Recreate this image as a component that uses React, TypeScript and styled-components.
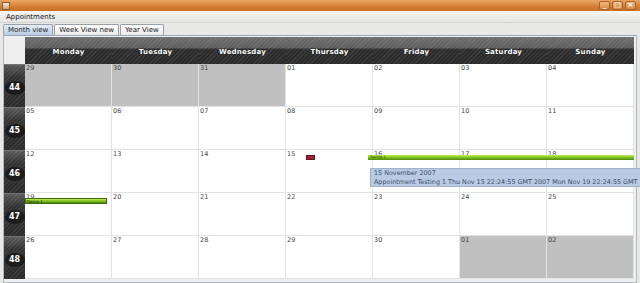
import React from 'react'
import styled, { createGlobalStyle } from 'styled-components'

const Global = createGlobalStyle`
  html, body { margin: 0; padding: 0; background: #e6e6e6; overflow: hidden; }
  * { box-sizing: border-box; }
`

const days = ['Monday', 'Tuesday', 'Wednesday', 'Thursday', 'Friday', 'Saturday', 'Sunday']

const weeks = [
  { n: 44, dates: ['29', '30', '31', '01', '02', '03', '04'], grey: [0, 1, 2] },
  { n: 45, dates: ['05', '06', '07', '08', '09', '10', '11'], grey: [] },
  { n: 46, dates: ['12', '13', '14', '15', '16', '17', '18'], grey: [] },
  { n: 47, dates: ['19', '20', '21', '22', '23', '24', '25'], grey: [] },
  { n: 48, dates: ['26', '27', '28', '29', '30', '01', '02'], grey: [5, 6] },
]

const App = () => {
  return (
    <Window>
      <Global />
      <TitleBar>
        <AppIcon />
        <WinButtons>
          <WinBtn>_</WinBtn>
          <WinBtn>□</WinBtn>
          <WinBtn>×</WinBtn>
        </WinButtons>
      </TitleBar>
      <MenuBar>Appointments</MenuBar>
      <Tabs>
        <Tab active>Month view</Tab>
        <Tab>Week View new</Tab>
        <Tab>Year View</Tab>
      </Tabs>
      <Panel>
        <Calendar>
          <Corner />
          {days.map(d => (
            <DayHead key={d}>{d}</DayHead>
          ))}
          {weeks.map((w, i) => (
            <React.Fragment key={w.n}>
              <WeekCell>
                <WeekBadge>{w.n}</WeekBadge>
              </WeekCell>
              {w.dates.map((d, j) => (
                <Cell key={j} grey={w.grey.includes(j)}>
                  <DateNum>{d}</DateNum>
                  {i === 2 && j === 3 && <RedMark />}
                  {i === 2 && j === 4 && <LongBar>Testing 1</LongBar>}
                  {i === 3 && j === 0 && <DemoBar>Demo 1</DemoBar>}
                </Cell>
              ))}
            </React.Fragment>
          ))}
        </Calendar>
        <Tooltip>
          <div>15 November 2007</div>
          <div>Appointment Testing 1 Thu Nov 15 22:24:55 GMT 2007 Mon Nov 19 22:24:55 GMT</div>
        </Tooltip>
      </Panel>
    </Window>
  )
}

export default App

const Window = styled.div`
  width: 640px;
  height: 283px;
  display: flex;
  flex-direction: column;
  font-family: 'DejaVu Sans', sans-serif;
  background: #e8e8e7;
`
const TitleBar = styled.div`
  height: 11px;
  flex: none;
  background: linear-gradient(#e9a765, #d47e34 60%, #c96f27);
  display: flex;
  align-items: center;
  justify-content: space-between;
  padding: 0 4px 0 2px;
`
const AppIcon = styled.div`
  width: 8px;
  height: 8px;
  border: 1px solid #8a5a2a;
  background: linear-gradient(#f6e9d8, #c9a47c);
`
const WinButtons = styled.div`
  display: flex;
  gap: 2px;
`
const WinBtn = styled.div`
  width: 11px;
  height: 9px;
  border: 1px solid #a8602a;
  border-radius: 2px;
  background: linear-gradient(#f0b880, #d58a48);
  color: #fff;
  font-size: 7px;
  line-height: 7px;
  text-align: center;
  font-weight: bold;
`
const MenuBar = styled.div`
  height: 12px;
  flex: none;
  background: linear-gradient(#f4f4f3, #e6e6e4);
  font-size: 7px;
  line-height: 12px;
  padding-left: 6px;
  color: #111;
  border-bottom: 1px solid #d4d4d2;
`
const Tabs = styled.div`
  height: 12px;
  flex: none;
  display: flex;
  align-items: flex-end;
  gap: 1px;
  padding-left: 3px;
`
const Tab = styled.div<{ active?: boolean }>`
  height: 11px;
  padding: 0 4px;
  font-size: 7px;
  line-height: 10px;
  color: #1a1a1a;
  border: 1px solid #9aa0a8;
  border-bottom: none;
  border-radius: 2px 2px 0 0;
  background: ${p => (p.active ? 'linear-gradient(#e4edf7, #b9cde4)' : 'linear-gradient(#fdfdfd, #ebebeb)')};
`
const Panel = styled.div`
  position: relative;
  flex: 1;
  margin: 0 3px 2px 3px;
  border: 1px solid #b4b8be;
  border-top: 1px solid #9aa6b4;
  background: #eef0f2;
  padding: 1px 2px 3px 0;
`
const stripes = `repeating-linear-gradient(135deg, rgba(255,255,255,0.07) 0 1px, rgba(0,0,0,0) 1px 3px)`
const Calendar = styled.div`
  display: grid;
  grid-template-columns: 21px repeat(7, 87px);
  grid-template-rows: 27px repeat(5, 43px);
`
const Corner = styled.div`
  background: #eeeeee;
`
const DayHead = styled.div`
  background: ${stripes}, linear-gradient(#6e6e6e 0, #5e5e5e 40%, #2e2e2e 45%, #2a2a2a 100%);
  color: #fff;
  font-weight: bold;
  font-size: 7px;
  display: flex;
  align-items: center;
  justify-content: center;
  padding-top: 2px;
  letter-spacing: 0.2px;
  text-shadow: 0 0 1px #000;
`
const WeekCell = styled.div`
  background: ${stripes}, linear-gradient(#5a5a5a, #333 30%, #2c2c2c);
  display: flex;
  align-items: center;
  justify-content: center;
  border-top: 1px solid #777;
`
const WeekBadge = styled.div`
  width: 20px;
  height: 14px;
  border-radius: 50%;
  background: #1c1c1c;
  color: #fff;
  font-weight: bold;
  font-size: 8px;
  line-height: 14px;
  text-align: center;
  margin-top: 4px;
`
const Cell = styled.div<{ grey?: boolean }>`
  position: relative;
  background: ${p => (p.grey ? '#c0c0c0' : '#ffffff')};
  border-right: 1px solid #dbe5ee;
  border-bottom: 1px solid #e2e2e2;
`
const DateNum = styled.div`
  font-size: 6.5px;
  color: #444;
  padding: 1px 0 0 1px;
  line-height: 7px;
`
const RedMark = styled.div`
  position: absolute;
  left: 20px;
  top: 5px;
  width: 9px;
  height: 5px;
  background: #a3203a;
  border: 1px solid #6a1020;
`
const LongBar = styled.div`
  position: absolute;
  left: -5px;
  top: 5px;
  width: 266px;
  height: 5px;
  background: linear-gradient(#c4ef5a, #7cc11f 50%, #4d8a0e);
  font-size: 3.5px;
  line-height: 5px;
  color: #2a4a08;
  padding-left: 2px;
  z-index: 1;
`
const DemoBar = styled.div`
  position: absolute;
  left: 0;
  top: 5px;
  width: 82px;
  height: 6px;
  background: linear-gradient(#c4ef5a, #7cc11f 50%, #4d8a0e);
  border: 1px solid #3c6a0c;
  font-size: 4px;
  line-height: 5px;
  color: #1e3604;
  padding-left: 1px;
`
const Tooltip = styled.div`
  position: absolute;
  left: 366px;
  top: 132px;
  width: 280px;
  height: 19px;
  background: #b8cbe2;
  border: 1px solid #9fb3cc;
  color: #3a4f68;
  font-size: 6.4px;
  line-height: 9px;
  padding: 0 0 0 3px;
  white-space: nowrap;
  overflow: hidden;
  z-index: 2;
`
